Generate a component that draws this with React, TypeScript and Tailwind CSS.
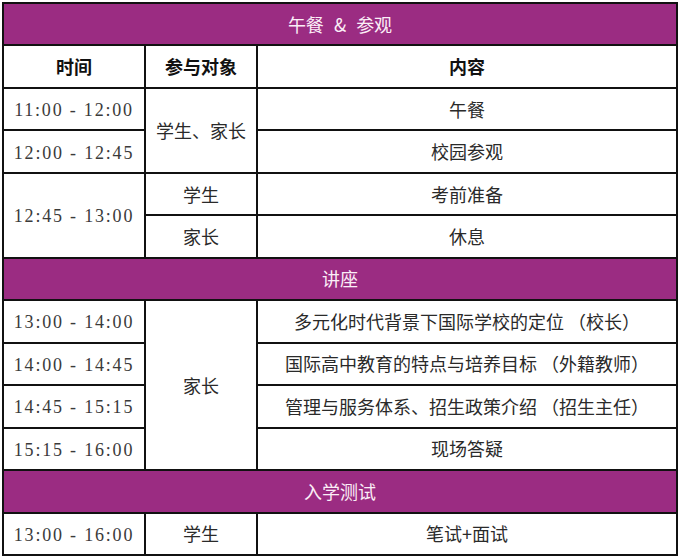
import React from 'react';

type Cell = {
  text: string;
  col: string;
  row: string;
  kind?: 'band' | 'head' | 'time' | 'text';
};

const cells: Cell[] = [
  { text: '午餐 & 参观', col: 'col-span-3', row: 'row-start-1', kind: 'band' },
  { text: '时间', col: 'col-start-1', row: 'row-start-2', kind: 'head' },
  { text: '参与对象', col: 'col-start-2', row: 'row-start-2', kind: 'head' },
  { text: '内容', col: 'col-start-3', row: 'row-start-2', kind: 'head' },

  { text: '11:00 - 12:00', col: 'col-start-1', row: 'row-start-3', kind: 'time' },
  { text: '学生、家长', col: 'col-start-2', row: 'row-start-3 row-span-2' },
  { text: '午餐', col: 'col-start-3', row: 'row-start-3' },
  { text: '12:00 - 12:45', col: 'col-start-1', row: 'row-start-4', kind: 'time' },
  { text: '校园参观', col: 'col-start-3', row: 'row-start-4' },

  { text: '12:45 - 13:00', col: 'col-start-1', row: 'row-start-5 row-span-2', kind: 'time' },
  { text: '学生', col: 'col-start-2', row: 'row-start-5' },
  { text: '考前准备', col: 'col-start-3', row: 'row-start-5' },
  { text: '家长', col: 'col-start-2', row: 'row-start-6' },
  { text: '休息', col: 'col-start-3', row: 'row-start-6' },

  { text: '讲座', col: 'col-span-3', row: 'row-start-7', kind: 'band' },

  { text: '13:00 - 14:00', col: 'col-start-1', row: 'row-start-8', kind: 'time' },
  { text: '家长', col: 'col-start-2', row: 'row-start-8 row-span-4' },
  { text: '多元化时代背景下国际学校的定位 （校长）', col: 'col-start-3', row: 'row-start-8' },
  { text: '14:00 - 14:45', col: 'col-start-1', row: 'row-start-9', kind: 'time' },
  { text: '国际高中教育的特点与培养目标 （外籍教师）', col: 'col-start-3', row: 'row-start-9' },
  { text: '14:45 - 15:15', col: 'col-start-1', row: 'row-start-10', kind: 'time' },
  { text: '管理与服务体系、招生政策介绍 （招生主任）', col: 'col-start-3', row: 'row-start-10' },
  { text: '15:15 - 16:00', col: 'col-start-1', row: 'row-start-11', kind: 'time' },
  { text: '现场答疑', col: 'col-start-3', row: 'row-start-11' },

  { text: '入学测试', col: 'col-span-3', row: 'row-start-12', kind: 'band' },

  { text: '13:00 - 16:00', col: 'col-start-1', row: 'row-start-13', kind: 'time' },
  { text: '学生', col: 'col-start-2', row: 'row-start-13' },
  { text: '笔试+面试', col: 'col-start-3', row: 'row-start-13' },
];

function ScheduleCell({ cell }: { cell: Cell }) {
  const kind = cell.kind ?? 'text';
  const base = `${cell.col} ${cell.row} flex items-center justify-center whitespace-pre text-[18px]`;

  if (kind === 'band') {
    return (
      <div className={`${base} col-start-1 bg-[#9b2c82] text-[#fbeef7] font-['Noto_Sans_CJK_SC',sans-serif]`}>
        {cell.text === '午餐 & 参观' ? (
          <span>
            午餐<span className="mx-[10px]">&amp;</span>参观
          </span>
        ) : (
          cell.text
        )}
      </div>
    );
  }

  if (kind === 'head') {
    return (
      <div className={`${base} bg-white text-[#111] font-bold font-['Noto_Sans_CJK_SC',sans-serif]`}>
        {cell.text}
      </div>
    );
  }

  if (kind === 'time') {
    return (
      <div className={`${base} bg-white text-[#3a3a3a] tracking-[1.8px] pt-[3px] font-['Liberation_Serif',serif]`}>
        {cell.text}
      </div>
    );
  }

  return (
    <div className={`${base} bg-white text-[#2a2a2a] font-['Noto_Sans_CJK_SC',sans-serif]`}>
      {cell.text}
    </div>
  );
}

export default function App() {
  return (
    <div className="w-[681px] h-[560px] bg-white pt-[2px] pl-[2px]">
      <div className="w-[676px] h-[554px] bg-[#111] p-[2px] grid grid-cols-[140px_110px_1fr] grid-rows-[repeat(13,1fr)] gap-[2px]">
        {cells.map((c, i) => (
          <ScheduleCell key={i} cell={c} />
        ))}
      </div>
    </div>
  );
}
